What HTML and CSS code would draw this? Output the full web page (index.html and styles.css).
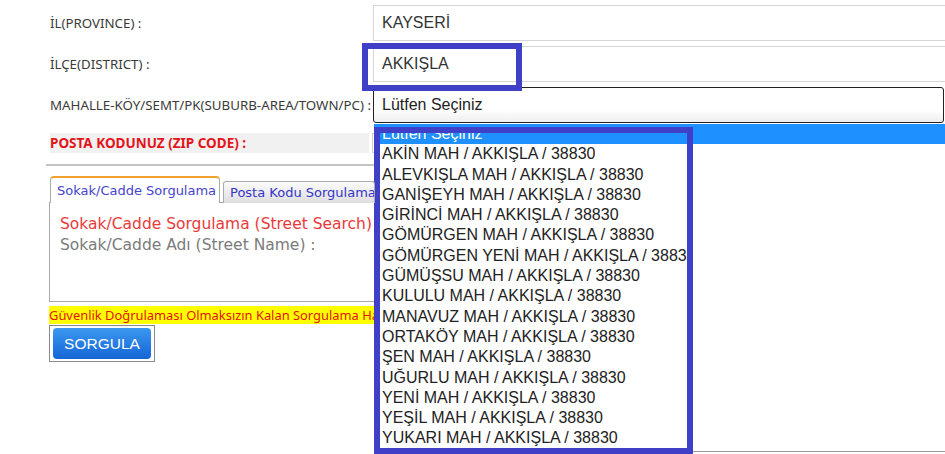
FILE: index.html
```html
<!DOCTYPE html>
<html lang="tr">
<head>
    <meta charset="UTF-8">
    <meta name="viewport" content="width=device-width, initial-scale=1.0">
    <title>Posta Kodu Sorgulama</title>
    <link rel="stylesheet" href="styles.css">
</head>
<body>
    <div class="page">
        <div class="form">
            <div class="row">
                <label class="lbl">İL(PROVINCE) :</label>
                <div class="field">KAYSERİ</div>
            </div>
            <div class="row">
                <label class="lbl">İLÇE(DISTRICT) :</label>
                <div class="field">AKKIŞLA</div>
            </div>
            <div class="row">
                <label class="lbl">MAHALLE-KÖY/SEMT/PK(SUBURB-AREA/TOWN/PC) :</label>
                <div class="select">Lütfen Seçiniz</div>
            </div>
        </div>

        <div class="zip-row">
            <span class="zip-lbl">POSTA KODUNUZ (ZIP CODE) :</span>
            <div class="zip-field"></div>
        </div>
        <div class="sep"></div>

        <div class="tabs">
            <div class="tab tab-active">Sokak/Cadde Sorgulama</div>
            <div class="tab"><span class="clip tab-clip">Posta Kodu Sorgulama</span></div>
        </div>
        <div class="panel">
            <div class="clip panel-title">Sokak/Cadde Sorgulama (Street Search)</div>
            <div class="clip panel-sub">Sokak/Cadde Adı (Street Name) :</div>
        </div>

        <div class="notice">Güvenlik Doğrulaması Olmaksızın Kalan Sorgulama Ha</div>
        <div class="btn-wrap">
            <button class="btn">SORGULA</button>
        </div>
    </div>

    <!-- açık liste (select açılmış hali) -->
    <div class="dropdown">
        <div class="opt opt-selected">Lütfen Seçiniz</div>
        <div class="opt"><span>AKİN MAH / AKKIŞLA / 38830</span></div>
        <div class="opt"><span>ALEVKIŞLA MAH / AKKIŞLA / 38830</span></div>
        <div class="opt"><span>GANİŞEYH MAH / AKKIŞLA / 38830</span></div>
        <div class="opt"><span>GİRİNCİ MAH / AKKIŞLA / 38830</span></div>
        <div class="opt"><span>GÖMÜRGEN MAH / AKKIŞLA / 38830</span></div>
        <div class="opt"><span>GÖMÜRGEN YENİ MAH / AKKIŞLA / 38830</span></div>
        <div class="opt"><span>GÜMÜŞSU MAH / AKKIŞLA / 38830</span></div>
        <div class="opt"><span>KULULU MAH / AKKIŞLA / 38830</span></div>
        <div class="opt"><span>MANAVUZ MAH / AKKIŞLA / 38830</span></div>
        <div class="opt"><span>ORTAKÖY MAH / AKKIŞLA / 38830</span></div>
        <div class="opt"><span>ŞEN MAH / AKKIŞLA / 38830</span></div>
        <div class="opt"><span>UĞURLU MAH / AKKIŞLA / 38830</span></div>
        <div class="opt"><span>YENİ MAH / AKKIŞLA / 38830</span></div>
        <div class="opt"><span>YEŞİL MAH / AKKIŞLA / 38830</span></div>
        <div class="opt"><span>YUKARI MAH / AKKIŞLA / 38830</span></div>
    </div>

    <!-- işaretleme çerçeveleri -->
    <div class="mark mark-district"></div>
    <div class="mark mark-list"></div>
</body>
</html>
```

FILE: styles.css
```css
body {
    margin: 0;
    overflow: hidden;
    background: #fff;
    font-family: "Noto Sans", sans-serif;
}

.page {
    padding-left: 50px;
}

.form {
    padding-top: 5px;
}

.row {
    display: grid;
    grid-template-columns: 323px 600px;
    align-items: center;
    height: 36px;
}

.row + .row {
    margin-top: 5px;
}

.lbl {
    font-size: 13.3px;
    color: #3a3a3a;
    white-space: nowrap;
}

.field {
    box-sizing: border-box;
    height: 36px;
    border: 1px solid #d6d6d6;
    padding: 0 8px;
    display: flex;
    align-items: center;
    font: 16px "Liberation Sans", Arial, sans-serif;
    color: #333;
}

.select {
    box-sizing: border-box;
    width: 571px;
    height: 36px;
    border: 1px solid #222;
    border-radius: 3px;
    background: linear-gradient(#fff 65%, #eeeeee);
    padding: 0 8px;
    display: flex;
    align-items: center;
    font: 16px "Liberation Sans", Arial, sans-serif;
    color: #222;
}

/* posta kodu satırı */
.zip-row {
    margin-top: 10px;
    display: flex;
    height: 20px;
}

.zip-lbl {
    width: 319px;
    background: #f1f1f1;
    color: #e5141b;
    font-weight: bold;
    font-size: 13.5px;
    line-height: 20px;
    white-space: nowrap;
}

.zip-field {
    margin-left: 3px;
    width: 300px;
    border: 1px solid #d0d0d0;
    box-sizing: border-box;
}

.sep {
    margin: 11px 0 0 -4px;
    width: 340px;
    border-top: 2px solid #c4c4c4;
}

/* metin, açılan listenin altında kalan kısımdan kesilir */
.clip {
    display: block;
    overflow: hidden;
    white-space: nowrap;
}

/* sekmeler */
.tabs {
    margin-top: 11px;
    display: flex;
    align-items: flex-end;
    gap: 3px;
    height: 26px;
    position: relative;
    z-index: 1;
    margin-bottom: -1px;
}

.tab {
    box-sizing: border-box;
    height: 22px;
    padding: 0 0 0 6px;
    border: 1px solid #aaa;
    border-bottom: none;
    border-radius: 3px 3px 0 0;
    background: linear-gradient(#fbfbfb, #dedede);
    font: 13px "DejaVu Sans", Verdana, sans-serif;
    line-height: 21px;
    color: #3535c8;
    white-space: nowrap;
}

.tab-clip {
    width: 144px;
}

.tab-active {
    width: 170px;
    height: 27px;
    padding-left: 6px;
    border-top: 2px solid #efa22e;
    border-radius: 4px 4px 0 0;
    background: #fff;
    line-height: 25px;
    color: #4444cc;
}

.panel {
    box-sizing: border-box;
    margin-left: -1px;
    width: 700px;
    height: 100px;
    border: 1px solid #a8a8a8;
    padding: 11px 10px 0;
    font: 15.5px "DejaVu Sans", Verdana, sans-serif;
    line-height: 21px;
}

.panel .clip {
    width: 314px;
}

.panel-title {
    color: #e83a3a;
}

.panel-sub {
    color: #7b7b7b;
}

.notice {
    margin: 4px 0 0 -1px;
    width: 325px;
    height: 18px;
    overflow: hidden;
    background: #ffff00;
    color: #e3140e;
    font-size: 12.9px;
    line-height: 18px;
    white-space: nowrap;
}

.btn-wrap {
    box-sizing: border-box;
    margin: 1px 0 0 -1px;
    width: 106px;
    height: 37px;
    border: 1px solid #8a8a8a;
    padding: 2px 3px;
}

.btn {
    display: block;
    width: 98px;
    height: 31px;
    border: none;
    border-radius: 4px;
    background: linear-gradient(#3b98ef, #1565d6);
    color: #fff;
    font: 15.5px "Liberation Sans", Arial, sans-serif;
    padding: 0;
}

/* açılmış liste */
.dropdown {
    position: absolute;
    left: 374px;
    top: 124px;
    width: 571px;
    height: 328px;
    box-sizing: border-box;
    background: #fff;
    border-bottom: 1px solid #9a9a9a;
    overflow: hidden;
}

.opt {
    height: 20.3px;
    padding-left: 8px;
    font: 16px "Liberation Sans", Arial, sans-serif;
    line-height: 20.3px;
    color: #222;
    white-space: nowrap;
}

.opt span {
    display: inline-block;
    max-width: 306px;
    overflow: hidden;
    vertical-align: top;
}

.opt-selected {
    background: #1e90ff;
    color: #fff;
}

.mark {
    position: absolute;
    box-sizing: border-box;
    border: 6px solid #3f3fc8;
}

.mark-district {
    left: 362px;
    top: 43px;
    width: 160px;
    height: 48px;
}

.mark-list {
    left: 374px;
    top: 127px;
    width: 319px;
    height: 327px;
}
```
